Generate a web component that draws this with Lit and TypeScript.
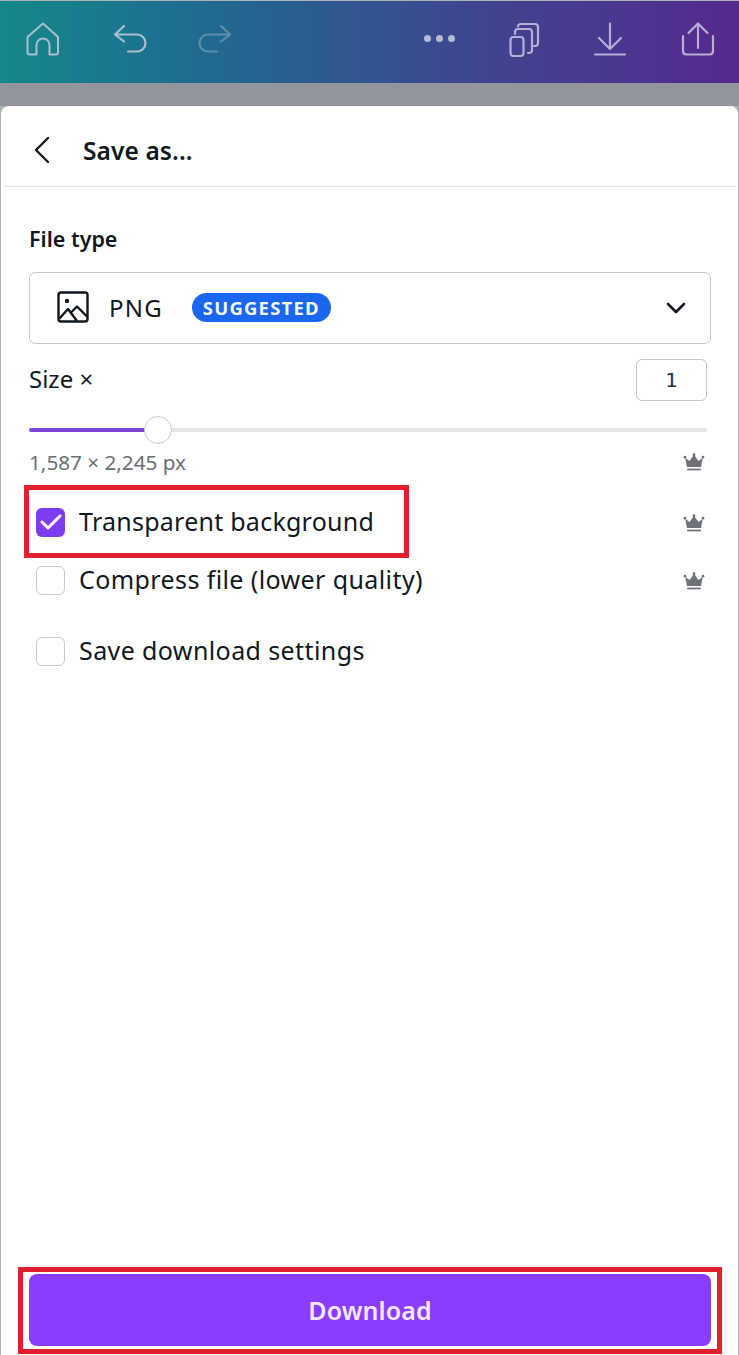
import { LitElement, html, css, svg } from "lit";
import { customElement } from "lit/decorators.js";

const crown = html`<svg class="crown" viewBox="0 0 20 20" width="22" height="22" aria-hidden="true">
  <path fill="#6f7178" d="M2 6.2 6 9l3.3-4.6h1.4L14 9l4-2.8-1.6 8.3H3.6z"/>
  <circle cx="10" cy="3.4" r="1.3" fill="#6f7178"/><circle cx="1.8" cy="5.6" r="1.2" fill="#6f7178"/><circle cx="18.2" cy="5.6" r="1.2" fill="#6f7178"/>
  <rect x="3.8" y="16" width="12.4" height="1.6" fill="#6f7178"/>
</svg>`;

const icon = (w: number, body: unknown) => html`<svg viewBox="0 0 ${w} ${w}" width=${w} height=${w} fill="none" stroke="currentColor" stroke-width="2.2" stroke-linecap="round" stroke-linejoin="round" aria-hidden="true">${body}</svg>`;

@customElement("app-root")
export class AppRoot extends LitElement {
  static styles = css`
    :host { display: flex; flex-direction: column; width: 739px; height: 1355px; background: #aab4b6; font-family: "Noto Sans", sans-serif; color: #111820; overflow: hidden; position: relative; box-sizing: border-box; }
    .top { height: 82px; margin-top: 1px; flex: none; background: linear-gradient(90deg, #14888a 0%, #1f6a90 28%, #3d4790 62%, #55298f 100%); display: flex; align-items: center; color: #a9bfd0; padding: 0 24px 7px 25px; box-sizing: border-box; }
    .top svg { display: block; flex: none; overflow: visible; }
    .left, .right { display: flex; align-items: center; }
    .left { gap: 52px; }
    .right { gap: 52px; margin-left: auto; color: #b6aed4; }
    .share { margin-left: 2px; }
    .redo { color: #5c8ea8; margin-left: -5px; }
    .undo { color: #a9c0cc; }
    .dots { display: flex; gap: 5px; color: #b6bcd2; }
    .dots i { width: 7px; height: 7px; border-radius: 50%; background: currentColor; }
    .dim { height: 23px; flex: none; background: #92969c; }
    .sheet { flex: 1; margin: 0 1px; background: #fff; border-radius: 8px 8px 0 0; display: flex; flex-direction: column; position: relative; }
    .head { height: 81px; box-sizing: border-box; margin: 0 2px; border-bottom: 1px solid #e2e5e6; display: flex; align-items: center; padding: 8px 0 0 30px; gap: 32px; flex: none; }
    .head svg { display: block; }
    .title { font-size: 24.5px; font-weight: 600; letter-spacing: 0.1px; }
    .body { padding: 38px 30px 0 28px; flex: 1; display: flex; flex-direction: column; }
    .label { font-size: 21.5px; font-weight: 600; line-height: 28px; }
    .select { margin-top: 19px; height: 72px; box-sizing: border-box; border: 1.5px solid #c7c9cc; border-radius: 6px; display: flex; align-items: center; padding: 0 24px 2px 27px; width: 682px; }
    .png { font-size: 24px; margin-left: 20px; letter-spacing: 1.2px; }
    .badge { margin-left: 29px; background: #1a66ee; color: #f2f6ff; font-size: 18.5px; font-weight: 700; letter-spacing: 1.2px; height: 29px; border-radius: 15px; padding: 0 11px; display: flex; align-items: center; }
    .chev { margin: 2px 0 0 auto; color: #111820; display: block; }
    .sizerow { display: flex; align-items: center; justify-content: space-between; margin-top: 15px; height: 42px; width: 678px; }
    .size { font-size: 24px; padding-bottom: 4px; }
    .num { width: 71px; height: 42px; box-sizing: border-box; border: 1.5px solid #c7c9cc; border-radius: 6px; display: flex; align-items: center; justify-content: center; font-size: 20px; font-family: "DejaVu Sans", sans-serif; color: #2b2f33; }
    .slider { position: relative; height: 4px; width: 678px; background: #e4e5e6; border-radius: 2px; margin-top: 27px; }
    .fill { height: 100%; width: 118px; background: #7d44d8; border-radius: 2px; }
    .thumb { position: absolute; left: 115px; top: -12px; width: 28px; height: 28px; box-sizing: border-box; border-radius: 50%; background: #fff; border: 1.5px solid #c9cacc; }
    .dimrow { display: flex; align-items: center; justify-content: space-between; margin-top: 17px; width: 676px; height: 28px; box-sizing: border-box; padding-bottom: 3px; color: #6b6e73; font-size: 20.7px; }
    .crown { display: block; }
    .opt { display: flex; align-items: center; width: 676px; font-size: 25px; height: 58px; padding: 0 0 2px 7px; box-sizing: border-box; letter-spacing: 0.4px; }
    .opt.first { margin-top: 16px; letter-spacing: 0.25px; }
    .opt.last { margin-top: 13px; }
    .opt .crown { margin: 3px 0 0 auto; }
    .box { width: 29px; height: 29px; box-sizing: border-box; border: 1.5px solid #c7c9cc; border-radius: 6px; margin: 2px 14px 0 0; flex: none; }
    .box.on { background: #7d3cf0; border: 0; display: flex; align-items: center; justify-content: center; color: #fff; }
    .btn { margin: auto 0 9px; width: 682px; height: 72px; border-radius: 8px; background: #8b3dff; color: #f4e6ff; font-size: 25px; font-weight: 600; display: flex; align-items: center; justify-content: center; flex: none; letter-spacing: 0.1px; }
    .mark { position: absolute; border: 5px solid #e0202e; box-sizing: border-box; pointer-events: none; }
    .m1 { left: 24px; top: 485px; width: 385px; height: 73px; }
    .m2 { left: 18px; top: 1267px; width: 704px; height: 87px; }
  `;

  render() {
    return html`
      <div class="top">
        <div class="left">
          ${icon(36, svg`<path d="M2.500 16 18 2.500 33 16v15.500q0 2-2 2h-6.500V24a6.500 6.500 0 0 0-13 0v9.500H4.500q-2 0-2-2z" stroke-width="2"/>`)}
          <span class="undo">${icon(36, svg`<path d="M11 5 2 13.500l9 7M3 13.500h21a8.500 8.500 0 0 1 0 17H15"/>`)}</span>
          <span class="redo">${icon(36, svg`<path d="M25 5l9 8.500-9 7M33 13.500H12a8.500 8.500 0 0 0 0 17h9"/>`)}</span>
        </div>
        <div class="right">
          <div class="dots"><i></i><i></i><i></i></div>
          ${icon(34, svg`<rect x="3.500" y="15" width="13" height="19" rx="3"/><path d="M8 12v-2q0-3 3-3h11q3 0 3 3v18q0 3-3 3h-1M11 4.500q0-2.500 3-2.500h14q3 0 3 3v16q0 3-3 3h-1"/>`)}
          ${icon(34, svg`<path d="M17 1.500V26M6 16l11 11 11-11M2 32.500h30"/>`)}
          <span class="share">${icon(34, svg`<path d="M17 26V2M7.500 11 17 1.500 26.500 11M2 14v15q0 3.500 3.500 3.500h23q3.500 0 3.500-3.500V14"/>`)}</span>
        </div>
      </div>
      <div class="dim"></div>
      <div class="sheet">
        <div class="head">
          <svg width="18" height="28" viewBox="0 0 18 28" fill="none" stroke="#111820" stroke-width="2.400" stroke-linecap="round" stroke-linejoin="round" aria-hidden="true"><path d="M15 2 3 14l12 12"/></svg>
          <span class="title">Save as...</span>
        </div>
        <div class="body">
          <div class="label">File type</div>
          <div class="select">
            <svg width="32" height="32" viewBox="0 0 32 32" fill="none" stroke="#111820" stroke-width="2.400" stroke-linejoin="round" aria-hidden="true"><rect x="1.500" y="1.500" width="29" height="29" rx="2.500"/><circle cx="10" cy="10" r="2.200" fill="#111820" stroke="none"/><path d="M2 28l9-10 9 12M14 21.500l6-6 10 10"/></svg>
            <span class="png">PNG</span>
            <span class="badge">SUGGESTED</span>
            <svg class="chev" width="20" height="12" viewBox="0 0 20 12" fill="none" stroke="currentColor" stroke-width="2.600" stroke-linecap="round" stroke-linejoin="round" aria-hidden="true"><path d="M2 2l8 8 8-8"/></svg>
          </div>
          <div class="sizerow"><span class="size">Size ×</span><span class="num">1</span></div>
          <div class="slider"><div class="fill"></div><div class="thumb"></div></div>
          <div class="dimrow"><span>1,587 × 2,245 px</span>${crown}</div>
          <div class="opt first"><span class="box on"><svg width="22" height="16" viewBox="0 0 22 16" fill="none" stroke="currentColor" stroke-width="3" stroke-linecap="round" stroke-linejoin="round" aria-hidden="true"><path d="M2 8l6 6L20 2"/></svg></span>Transparent background${crown}</div>
          <div class="opt"><span class="box"></span>Compress file (lower quality)${crown}</div>
          <div class="opt last"><span class="box"></span>Save download settings</div>
          <div class="btn">Download</div>
        </div>
      </div>
      <div class="mark m1"></div>
      <div class="mark m2"></div>
    `;
  }
}
